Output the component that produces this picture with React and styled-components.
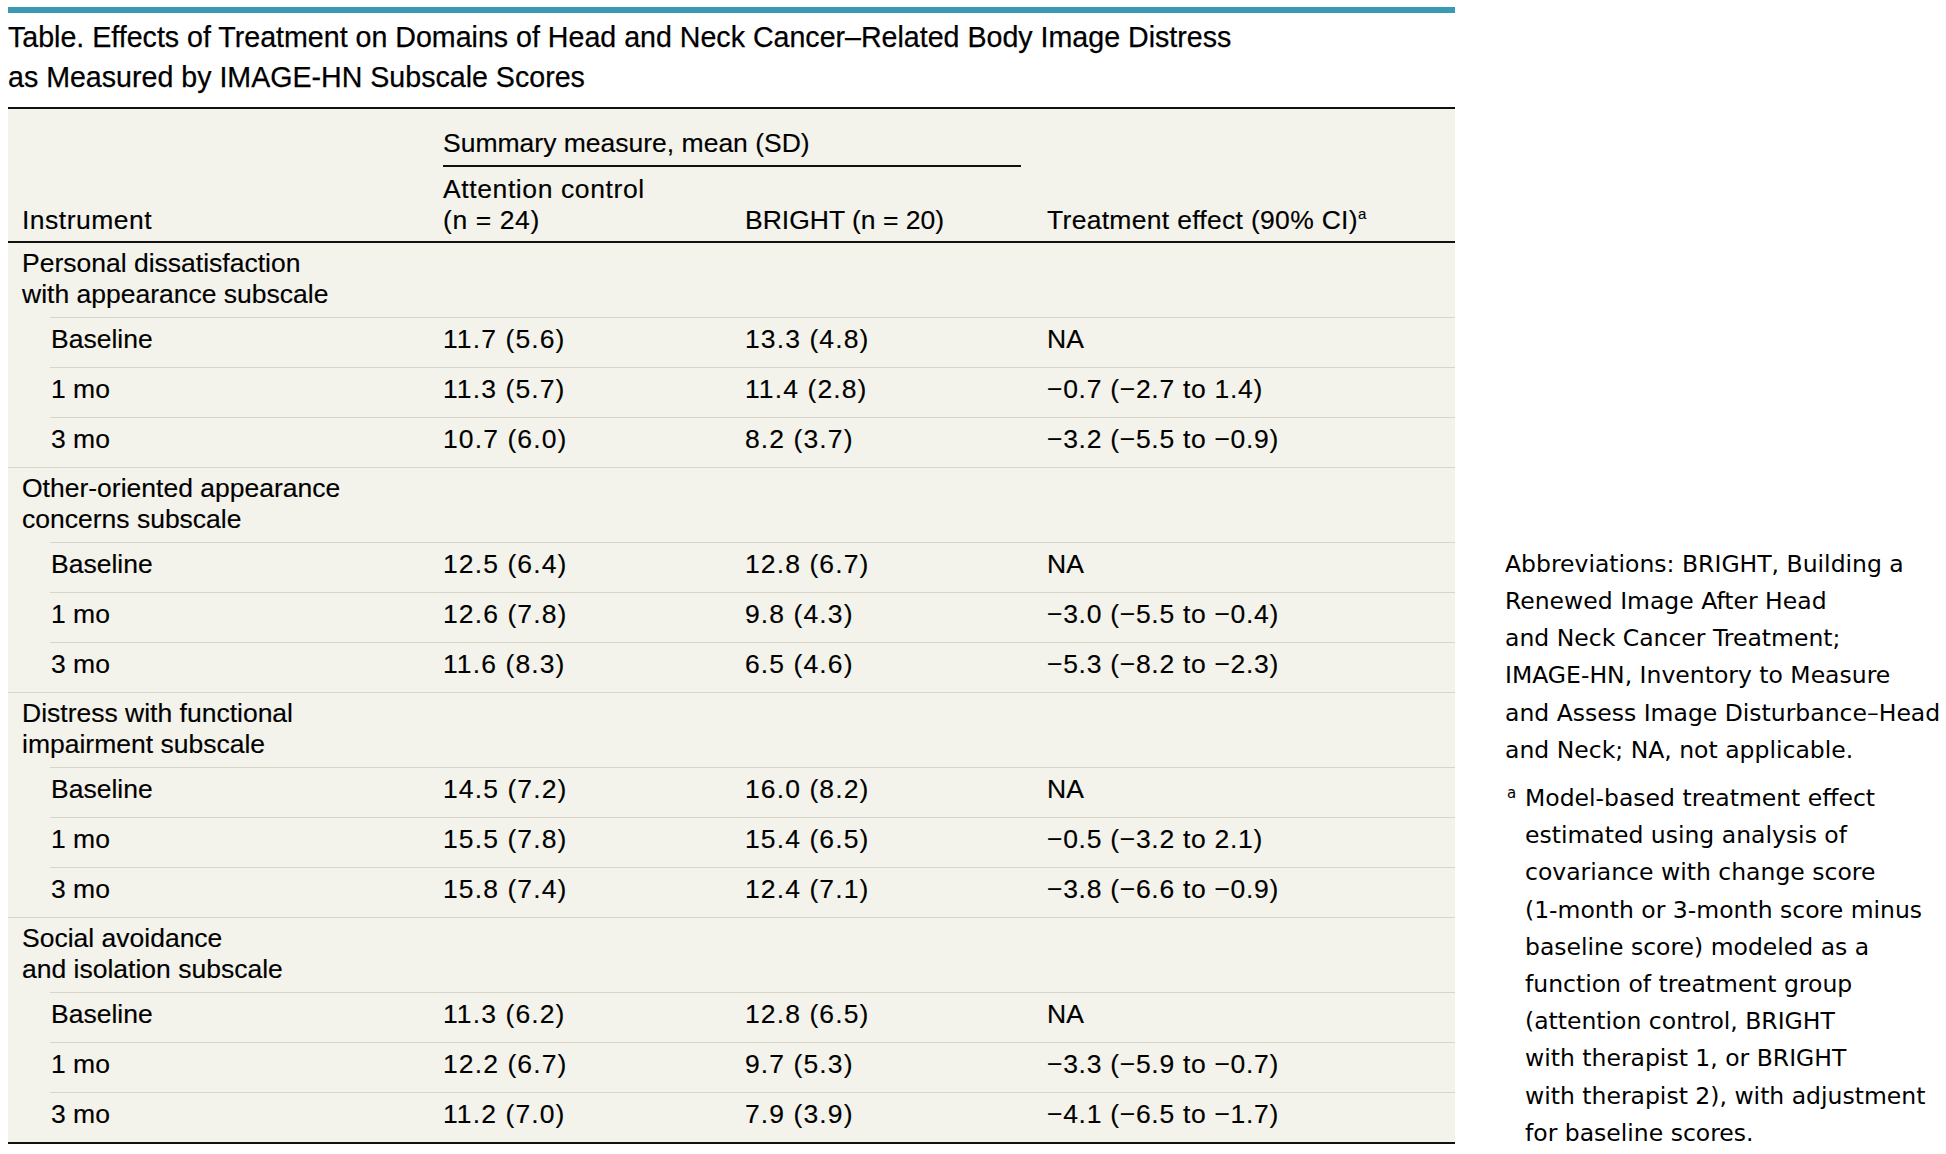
import React from "react";
import styled, { createGlobalStyle } from "styled-components";

const GlobalStyle = createGlobalStyle`
  html, body {
    margin: 0;
    padding: 0;
    background: #ffffff;
  }
  body {
    font-family: "Liberation Sans", Arial, sans-serif;
    color: #000000;
  }
`;

const Page = styled.div`
  display: flex;
  align-items: flex-end;
  gap: 50px;
  padding-left: 8px;
  width: 1946px;
  box-sizing: border-box;
`;

const Main = styled.div`
  width: 1447px;
  flex: none;
`;

const TopBar = styled.div`
  height: 6px;
  margin-top: 7px;
  background: #3a99b3;
`;

const Title = styled.h1`
  margin: 4px 0 10px;
  font-family: "Liberation Sans", Arial, sans-serif;
  font-weight: 400;
  font-size: 28.6px;
  line-height: 40px;
  color: #000000;
  -webkit-text-stroke: 0.25px #000000;
  white-space: nowrap;
`;

const Table = styled.div`
  background: #f3f3eb;
  border-top: 2px solid #111111;
  border-bottom: 2px solid #111111;
  font-size: 26.5px;
  line-height: 31px;
  color: #000000;
  -webkit-text-stroke: 0.15px #000000;
`;

const Header = styled.div`
  display: grid;
  grid-template-columns: 435px 302px 302px 1fr;
  grid-template-rows: auto auto;
  border-bottom: 2px solid #111111;
  white-space: nowrap;
`;

const HeadCell = styled.div`
  align-self: end;
  padding-bottom: 5.5px;
  padding-left: ${(p) => (p.$first ? "14px" : "0")};
  grid-row: ${(p) => (p.$span ? "1 / 3" : "2")};
  letter-spacing: ${(p) => p.$track || "0"};
`;

const SpanHead = styled.div`
  grid-column: 2 / 4;
  grid-row: 1;
  margin-top: 18.5px;
  margin-right: 26px;
  padding-bottom: 6.5px;
  border-bottom: 2px solid #111111;
  margin-bottom: 6.5px;
`;

const Sup = styled.sup`
  font-size: 15px;
  line-height: 0;
  vertical-align: 10px;
  letter-spacing: 0;
`;

const GroupRow = styled.div`
  padding: 5px 0 7px 14px;
  box-sizing: border-box;
  height: ${(p) => (p.$first ? "74px" : "75px")};
  border-top: ${(p) => (p.$first ? "none" : "1px solid #d8d6cb")};
  white-space: nowrap;
`;

const DataRow = styled.div`
  display: grid;
  grid-template-columns: 393px 302px 302px 1fr;
  margin-left: 42px;
  height: 50px;
  box-sizing: border-box;
  padding: 6px 0 12px;
  border-top: 1px solid #d8d6cb;
  white-space: nowrap;
`;

const Cell = styled.div`
  padding-left: ${(p) => (p.$label ? "1px" : "0")};
  letter-spacing: ${(p) => p.$track || "0"};
`;

const Notes = styled.div`
  flex: none;
  margin-bottom: -8px;
  font-family: "DejaVu Sans", sans-serif;
  font-size: 23.5px;
  line-height: 37.2px;
  color: #000000;
  white-space: nowrap;
`;

const NotePara = styled.p`
  margin: 0 0 ${(p) => (p.$gap ? "11px" : "0")};
`;

const FootNote = styled.div`
  display: flex;
`;

const FootMark = styled.span`
  width: 18px;
  flex: none;
  padding-left: 2px;
  font-size: 15px;
  line-height: 26px;
`;

const groups = [
  {
    label: ["Personal dissatisfaction", "with appearance subscale"],
    rows: [
      ["Baseline", "11.7 (5.6)", "13.3 (4.8)", "NA"],
      ["1 mo", "11.3 (5.7)", "11.4 (2.8)", "−0.7 (−2.7 to 1.4)"],
      ["3 mo", "10.7 (6.0)", "8.2 (3.7)", "−3.2 (−5.5 to −0.9)"],
    ],
  },
  {
    label: ["Other-oriented appearance", "concerns subscale"],
    rows: [
      ["Baseline", "12.5 (6.4)", "12.8 (6.7)", "NA"],
      ["1 mo", "12.6 (7.8)", "9.8 (4.3)", "−3.0 (−5.5 to −0.4)"],
      ["3 mo", "11.6 (8.3)", "6.5 (4.6)", "−5.3 (−8.2 to −2.3)"],
    ],
  },
  {
    label: ["Distress with functional", "impairment subscale"],
    rows: [
      ["Baseline", "14.5 (7.2)", "16.0 (8.2)", "NA"],
      ["1 mo", "15.5 (7.8)", "15.4 (6.5)", "−0.5 (−3.2 to 2.1)"],
      ["3 mo", "15.8 (7.4)", "12.4 (7.1)", "−3.8 (−6.6 to −0.9)"],
    ],
  },
  {
    label: ["Social avoidance", "and isolation subscale"],
    rows: [
      ["Baseline", "11.3 (6.2)", "12.8 (6.5)", "NA"],
      ["1 mo", "12.2 (6.7)", "9.7 (5.3)", "−3.3 (−5.9 to −0.7)"],
      ["3 mo", "11.2 (7.0)", "7.9 (3.9)", "−4.1 (−6.5 to −1.7)"],
    ],
  },
];

export default function App() {
  return (
    <>
      <GlobalStyle />
      <Page>
        <Main>
          <TopBar />
          <Title>
            Table. Effects of Treatment on Domains of Head and Neck Cancer–Related Body Image Distress
            <br />
            as Measured by IMAGE-HN Subscale Scores
          </Title>
          <Table>
            <Header>
              <HeadCell $first $span $track="0.5px">Instrument</HeadCell>
              <SpanHead>Summary measure, mean (SD)</SpanHead>
              <HeadCell $track="0.6px">
                Attention control
                <br />
                (n = 24)
              </HeadCell>
              <HeadCell>BRIGHT (n = 20)</HeadCell>
              <HeadCell $track="0.3px">
                Treatment effect (90% CI)<Sup>a</Sup>
              </HeadCell>
            </Header>
            {groups.map((g, gi) => (
              <React.Fragment key={gi}>
                <GroupRow $first={gi === 0}>
                  {g.label[0]}
                  <br />
                  {g.label[1]}
                </GroupRow>
                {g.rows.map((r, ri) => (
                  <DataRow key={ri}>
                    <Cell $label>{r[0]}</Cell>
                    <Cell $track="1.1px">{r[1]}</Cell>
                    <Cell $track="1.1px">{r[2]}</Cell>
                    <Cell $track={r[3] === "NA" ? "0" : "0.7px"}>{r[3]}</Cell>
                  </DataRow>
                ))}
              </React.Fragment>
            ))}
          </Table>
        </Main>
        <Notes>
          <NotePara $gap>
            Abbreviations: BRIGHT, Building a<br />
            Renewed Image After Head<br />
            and Neck Cancer Treatment;<br />
            IMAGE-HN, Inventory to Measure<br />
            and Assess Image Disturbance–Head<br />
            and Neck; NA, not applicable.
          </NotePara>
          <FootNote>
            <FootMark>a</FootMark>
            <NotePara>
              Model-based treatment effect<br />
              estimated using analysis of<br />
              covariance with change score<br />
              (1-month or 3-month score minus<br />
              baseline score) modeled as a<br />
              function of treatment group<br />
              (attention control, BRIGHT<br />
              with therapist 1, or BRIGHT<br />
              with therapist 2), with adjustment<br />
              for baseline scores.
            </NotePara>
          </FootNote>
        </Notes>
      </Page>
    </>
  );
}
